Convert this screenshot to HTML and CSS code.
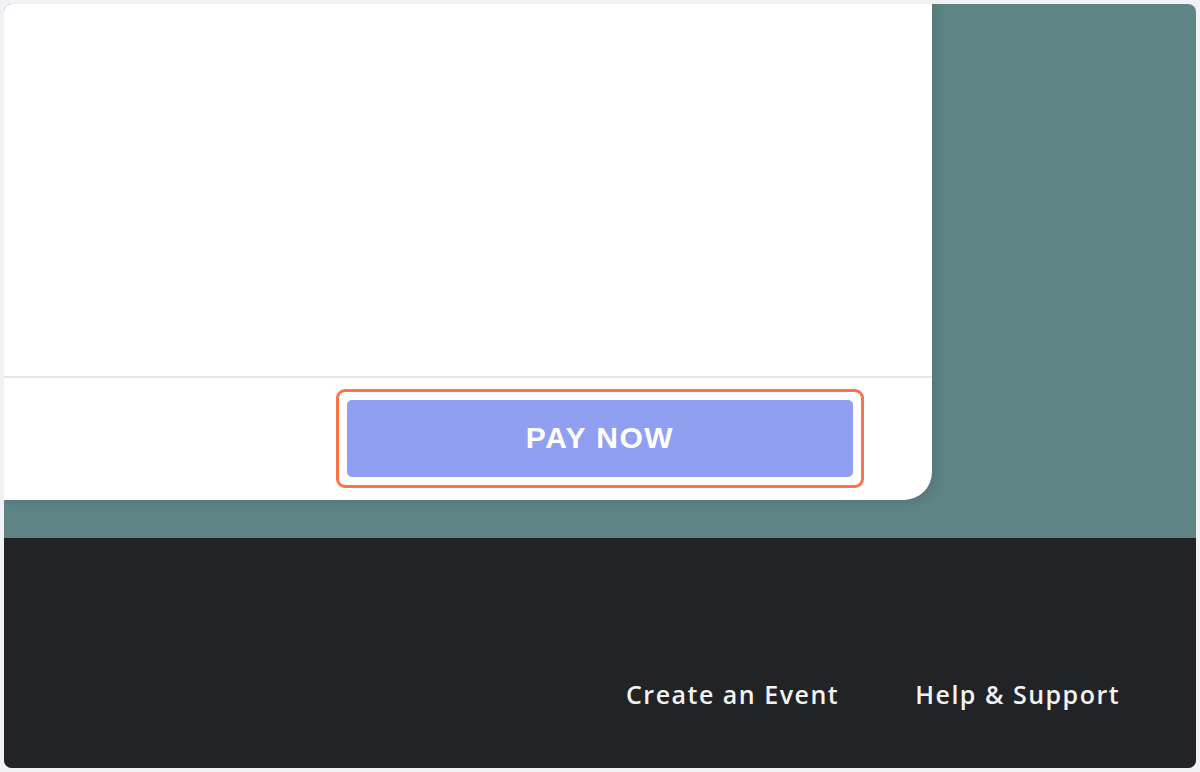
FILE: index.html
```html
<!DOCTYPE html>
<html lang="en">
<head>
<meta charset="utf-8">
<title>Checkout</title>
<link rel="stylesheet" href="styles.css">
</head>
<body>
<div class="app">
  <main class="main">
    <section class="card">
      <div class="card-body"></div>
      <div class="card-actions">
        <div class="focus-ring">
          <button class="pay-btn" type="button">PAY NOW</button>
        </div>
      </div>
    </section>
  </main>
  <footer class="footer">
    <nav class="footer-links">
      <a class="footer-link" href="#">Create an Event</a>
      <a class="footer-link" href="#">Help &amp; Support</a>
      <a class="footer-link" href="#">Legal</a>
    </nav>
  </footer>
</div>
</body>
</html>
```

FILE: styles.css
```css
* { box-sizing: border-box; }

html, body {
  margin: 0;
  padding: 0;
}

body {
  background: #f2f1f6;
  padding: 4px;
  width: 1200px;
  height: 772px;
  overflow: hidden;
  font-family: "Open Sans", "Liberation Sans", sans-serif;
}

.app {
  width: 1192px;
  height: 764px;
  border-radius: 8px;
  overflow: hidden;
  background: #5e8485;
  display: flex;
  flex-direction: column;
}

.main {
  height: 534px;
  flex: none;
  display: flex;
  align-items: flex-start;
}

.card {
  width: 928px;
  height: 496px;
  background: #ffffff;
  border-bottom-right-radius: 28px;
  box-shadow: 3px 0 12px rgba(0, 0, 0, 0.14);
  display: flex;
  flex-direction: column;
}

.card-body {
  flex: 1;
  border-bottom: 2px solid #e7e7e9;
}

.card-actions {
  height: 122px;
  flex: none;
  display: flex;
  justify-content: flex-end;
  padding: 11px 68px 0 0;
}

.focus-ring {
  width: 528px;
  height: 99px;
  border: 3px solid #ff7244;
  border-radius: 9px;
  padding: 8px;
}

.pay-btn {
  display: block;
  width: 100%;
  height: 77px;
  border: none;
  border-radius: 5px;
  background: #919ff0;
  color: #ffffff;
  font-family: "Liberation Sans", Arial, sans-serif;
  font-weight: 700;
  font-size: 30px;
  letter-spacing: 1.5px;
  padding: 0 0 2px 0;
  cursor: pointer;
}

.footer {
  flex: 1;
  background: #222327;
  padding-top: 139px;
}

.footer-links {
  display: flex;
  gap: 76px;
  padding-left: 622px;
  white-space: nowrap;
}

.footer-link {
  color: #f2f2f2;
  text-decoration: none;
  font-family: "Open Sans", sans-serif;
  font-weight: 600;
  font-size: 25px;
  letter-spacing: 1.5px;
  line-height: 34px;
}
```
